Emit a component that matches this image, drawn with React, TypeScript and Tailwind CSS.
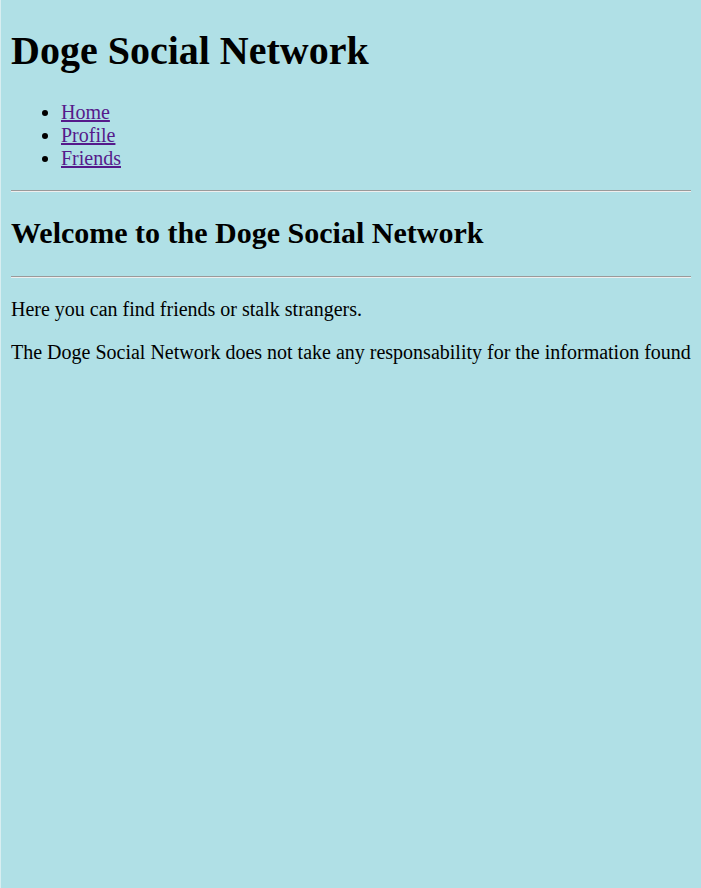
export default function App() {
  return (
    <div
      className="min-h-[888px] bg-[#b0e0e6] border-l border-l-[#d8eef1] px-[10px] py-[1px] text-black text-[20px]"
      style={{ fontFamily: '"Liberation Serif", "Times New Roman", serif' }}
    >
      <h1 className="text-[40px] font-bold leading-[46px] mt-[27px] mb-[27px]">Doge Social Network</h1>
      <ul className="list-disc pl-[50px] leading-[23px] my-[20px]">
        <li><a href="#" className="underline text-[#551a8b]">Home</a></li>
        <li><a href="#" className="underline text-[#551a8b]">Profile</a></li>
        <li><a href="#" className="underline text-[#551a8b]">Friends</a></li>
      </ul>
      <hr className="border-0 border-t border-t-[#9a9a9a] border-b border-b-[#eeeeee] h-0 mt-[20px] mb-[10px]" />
      <h2 className="text-[30px] font-bold leading-[34px] mt-[24px] mb-[26px]">Welcome to the Doge Social Network</h2>
      <hr className="border-0 border-t border-t-[#9a9a9a] border-b border-b-[#eeeeee] h-0 my-[10px]" />
      <p className="leading-[23px] mt-[20px]">Here you can find friends or stalk strangers.</p>
      <p className="leading-[23px] mt-[20px] whitespace-nowrap overflow-hidden">The Doge Social Network does not take any responsability for the information found</p>
    </div>
  );
}
